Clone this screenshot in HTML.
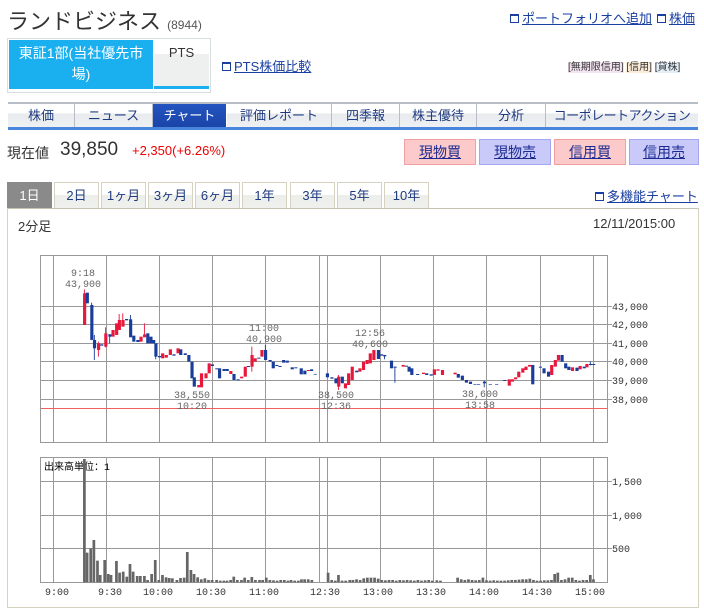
<!DOCTYPE html>
<html><head><meta charset="utf-8"><style>
*{margin:0;padding:0;box-sizing:border-box}
body{width:704px;height:602px;overflow:hidden;background:#fff;font-family:"Liberation Sans","Noto Sans CJK JP",sans-serif;color:#333;position:relative}
.a{position:absolute;white-space:nowrap}
a,.lk{color:#1a3fa0;text-decoration:underline}
.ico{display:inline-block;width:9px;height:9px;border:1px solid #1a3fa0;border-top-width:2px;margin-right:3px;vertical-align:0}
.tab{position:absolute;top:104px;height:23px;font-size:13px;text-align:center;line-height:23px;color:#1f3a80;background:linear-gradient(#fff 0,#fff 40%,#e8ebee 41%,#eef0f2 100%);border-right:1px solid #b8bec8;overflow:hidden;white-space:nowrap}
.btn{position:absolute;top:139px;height:26px;width:72px;font-size:14px;text-align:center;line-height:25px;text-decoration:underline;color:#1a2a90}
.p{position:absolute;top:182px;height:27px;width:45px;font-size:13px;text-align:center;line-height:26px;color:#1f3a80;background:linear-gradient(#fff 45%,#eceeea 46%,#f0f1ee);border:1px solid #d6d2c2;border-bottom:none}
</style></head><body>
<div class="a" style="left:7px;top:4px;font-size:22px;color:#333">ランドビジネス <span style="font-size:12px;color:#555">(8944)</span></div>
<div class="a lk" style="left:510px;top:8px;font-size:13px"><span class="ico"></span>ポートフォリオへ追加</div>
<div class="a lk" style="left:657px;top:8px;font-size:13px"><span class="ico"></span>株価</div>

<div class="a" style="left:7px;top:38px;width:204px;height:55px;border:1px solid #d8dde0;background:#fff"></div>
<div class="a" style="left:9px;top:40px;width:144px;height:49px;background:#1ab0f0;color:#fff;font-size:14px;text-align:center;line-height:21px;padding-top:3px;white-space:normal">東証1部(当社優先市<br>場)</div>
<div class="a" style="left:154px;top:40px;width:55px;height:49px;background:linear-gradient(#fff 0,#fff 30%,#eef0f0 31%,#eef0f0);border-bottom:3px solid #1ab0f0;font-size:13px;text-align:center;line-height:26px;color:#333">PTS</div>
<div class="a lk" style="left:222px;top:56px;font-size:13px"><span class="ico"></span>PTS株価比較</div>
<div class="a" style="left:568px;top:58px;font-size:10px;color:#333"><span style="background:#f4e4f2">[無期限信用]</span> <span style="background:#fbecd8">[信用]</span> <span style="background:#e2eef8">[貸株]</span></div>

<div class="a" style="left:8px;top:102px;width:690px;height:2px;background:#b8bec8"></div>
<div class="tab" style="left:8px;width:67px">株価</div>
<div class="tab" style="left:75px;width:78px">ニュース</div>
<div class="tab" style="left:153px;width:74px;color:#fff;background:linear-gradient(#2454c0,#1a44a8);border-right:1px solid #fff">チャート</div>
<div class="tab" style="left:227px;width:105px">評価レポート</div>
<div class="tab" style="left:332px;width:68px">四季報</div>
<div class="tab" style="left:400px;width:77px">株主優待</div>
<div class="tab" style="left:477px;width:69px">分析</div>
<div class="tab" style="left:546px;width:152px;border-right:none;letter-spacing:-0.5px">コーポレートアクション</div>
<div class="a" style="left:8px;top:127px;width:690px;height:3px;background:#4a85dd"></div>

<div class="a" style="left:7px;top:143px;font-size:14px;color:#333">現在値</div>
<div class="a" style="left:60px;top:139px;font-size:19px;color:#333">39,850</div>
<div class="a" style="left:132px;top:143px;font-size:13px;color:#e00">+2,350(+6.26%)</div>
<div class="btn" style="left:404px;background:#fccaca;border:1px solid #f0a0a0">現物買</div>
<div class="btn" style="left:479px;background:#cacafa;border:1px solid #a6a6f0">現物売</div>
<div class="btn" style="left:554px;background:#fccaca;border:1px solid #f0a0a0">信用買</div>
<div class="btn" style="left:629px;background:#cacafa;border:1px solid #a6a6f0;width:70px">信用売</div>

<div class="p" style="left:7px;background:#8a8a8a;color:#fff;border-color:#8a8a8a">1日</div>
<div class="p" style="left:54px">2日</div>
<div class="p" style="left:101px">1ヶ月</div>
<div class="p" style="left:148px">3ヶ月</div>
<div class="p" style="left:195px">6ヶ月</div>
<div class="p" style="left:242px">1年</div>
<div class="p" style="left:290px">3年</div>
<div class="p" style="left:337px">5年</div>
<div class="p" style="left:384px">10年</div>
<div class="a lk" style="left:595px;top:186px;font-size:13px"><span class="ico"></span>多機能チャート</div>

<div class="a" style="left:7px;top:208px;width:692px;height:400px;border:1px solid #d6d2c2;border-top:1px solid #c8c4b4"></div>
<div class="a" style="left:18px;top:216px;font-size:13px;color:#333">2分足</div>
<div class="a" style="left:593px;top:216px;font-size:13px;color:#333">12/11/2015:00</div>

<svg class="a" style="left:0;top:0" width="704" height="602" xmlns="http://www.w3.org/2000/svg">
<g stroke="#999" stroke-width="1" fill="none">
<rect x="40.5" y="255.5" width="567" height="187"/>
<rect x="40.5" y="457.5" width="567" height="125"/>
<path d="M53.5 256V442M106.5 256V442M159.5 256V442M212.5 256V442M265.5 256V442M319.5 256V442M327.5 256V442M380.5 256V442M433.5 256V442M486.5 256V442M540.5 256V442M593.5 256V442"/>
<path d="M53.5 458V582M106.5 458V582M159.5 458V582M212.5 458V582M265.5 458V582M319.5 458V582M327.5 458V582M380.5 458V582M433.5 458V582M486.5 458V582M540.5 458V582M593.5 458V582"/>
<path d="M41 306.5H612M41 324.5H612M41 343.5H612M41 361.5H612M41 380.5H612M41 399.5H612"/>
<path d="M41 481.5H612M41 515.5H612M41 548.5H612"/>
</g>
<path d="M41 408.5H607" stroke="#f06060" stroke-width="1"/>
<g font-family="Liberation Mono, monospace" font-size="10" fill="#333">
<text x="612" y="310">43,000</text><text x="612" y="328">42,000</text><text x="612" y="347">41,000</text><text x="612" y="365">40,000</text><text x="612" y="384">39,000</text><text x="612" y="403">38,000</text>
<text x="612" y="485">1,500</text><text x="612" y="519">1,000</text><text x="612" y="552">500</text>
<g fill="#666" text-anchor="middle">
<text x="83" y="276">9:18</text><text x="83" y="287">43,900</text>
<text x="192" y="398">38,550</text><text x="192" y="409">10:20</text>
<text x="264" y="331">11:00</text><text x="264" y="342">40,900</text>
<text x="336" y="398">38,500</text><text x="336" y="409">12:36</text>
<text x="370" y="336">12:56</text><text x="370" y="347">40,600</text>
<text x="480" y="397">38,600</text><text x="480" y="408">13:58</text>
</g>
<text x="44" y="470" fill="#000">出来高単位：1</text>
<g text-anchor="middle" fill="#333"><text x="57" y="595">9:00</text><text x="110" y="595">9:30</text><text x="158" y="595">10:00</text><text x="211" y="595">10:30</text><text x="264" y="595">11:00</text><text x="325" y="595">12:30</text><text x="378" y="595">13:00</text><text x="431" y="595">13:30</text><text x="484" y="595">14:00</text><text x="537" y="595">14:30</text><text x="590" y="595">15:00</text></g>
</g>
<g transform="translate(0,240) scale(0.4513,0.3333)">
<g fill="#e8183c">
<rect x="186" y="148" width="2" height="107"/><rect x="184" y="160" width="7" height="95"/>
<rect x="215" y="310" width="7" height="20"/><rect x="217" y="305" width="2" height="45"/>
<rect x="231" y="280" width="7" height="40"/><rect x="233" y="262" width="2" height="60"/>
<rect x="247" y="270" width="7" height="20"/><rect x="255" y="250" width="7" height="35"/><rect x="261" y="240" width="7" height="30"/><rect x="263" y="222" width="2" height="20"/>
<rect x="269" y="240" width="7" height="20"/><rect x="271" y="220" width="2" height="20"/>
<rect x="309" y="290" width="7" height="15"/><rect x="317" y="283" width="7" height="9"/><rect x="319" y="250" width="2" height="35"/>
<rect x="357" y="340" width="7" height="15"/><rect x="365" y="345" width="7" height="8"/><rect x="374" y="328" width="7" height="17"/><rect x="391" y="325" width="7" height="15"/>
<rect x="437" y="435" width="7" height="7"/><rect x="443" y="400" width="7" height="42"/><rect x="453" y="400" width="7" height="15"/><rect x="460" y="370" width="7" height="30"/>
<rect x="508" y="393" width="7" height="9"/><rect x="532" y="410" width="7" height="5"/><rect x="540" y="380" width="7" height="30"/>
<rect x="555" y="345" width="7" height="35"/><rect x="557" y="320" width="2" height="75"/><rect x="562" y="355" width="7" height="10"/><rect x="577" y="330" width="7" height="20"/>
<rect x="680" y="390" width="7" height="3"/><rect x="747" y="410" width="7" height="30"/><rect x="749" y="405" width="2" height="45"/>
<rect x="762" y="430" width="7" height="15"/><rect x="769" y="400" width="7" height="35"/><rect x="777" y="380" width="7" height="40"/>
<rect x="794" y="385" width="7" height="10"/><rect x="802" y="365" width="7" height="25"/><rect x="810" y="360" width="7" height="12"/><rect x="817" y="340" width="7" height="30"/><rect x="825" y="330" width="7" height="30"/>
<rect x="890" y="375" width="7" height="5"/><rect x="935" y="398" width="7" height="4"/><rect x="959" y="388" width="7" height="17"/><rect x="967" y="388" width="7" height="4"/><rect x="977" y="390" width="7" height="15"/>
<rect x="1005" y="398" width="7" height="5"/><rect x="1125" y="418" width="7" height="19"/><rect x="1132" y="418" width="7" height="7"/><rect x="1139" y="412" width="7" height="6"/><rect x="1146" y="395" width="7" height="17"/><rect x="1155" y="385" width="7" height="13"/><rect x="1162" y="380" width="7" height="10"/><rect x="1170" y="375" width="7" height="5"/>
<rect x="1219" y="375" width="7" height="30"/><rect x="1227" y="360" width="7" height="20"/><rect x="1234" y="345" width="7" height="17"/><rect x="1265" y="382" width="7" height="11"/><rect x="1282" y="378" width="7" height="10"/><rect x="1297" y="372" width="7" height="10"/>
</g>
<g fill="#1a3c9a">
<rect x="190" y="158" width="7" height="32"/>
<rect x="200" y="195" width="7" height="105"/><rect x="202" y="188" width="2" height="10"/>
<rect x="206" y="300" width="7" height="25"/><rect x="208" y="285" width="2" height="75"/>
<rect x="222" y="313" width="7" height="4"/><rect x="240" y="283" width="7" height="7"/><rect x="242" y="283" width="2" height="27"/>
<rect x="277" y="237" width="7" height="4"/>
<rect x="286" y="238" width="7" height="54"/><rect x="288" y="225" width="2" height="15"/>
<rect x="293" y="287" width="7" height="18"/><rect x="302" y="300" width="7" height="6"/>
<rect x="324" y="280" width="7" height="30"/><rect x="331" y="290" width="7" height="20"/><rect x="337" y="300" width="7" height="10"/>
<rect x="342" y="310" width="7" height="40"/><rect x="344" y="345" width="2" height="13"/><rect x="350" y="348" width="7" height="4"/>
<rect x="382" y="343" width="7" height="4"/><rect x="397" y="328" width="7" height="17"/><rect x="407" y="340" width="7" height="5"/>
<rect x="415" y="345" width="7" height="20"/><rect x="422" y="365" width="7" height="50"/><rect x="427" y="412" width="7" height="28"/>
<rect x="467" y="373" width="7" height="5"/><rect x="477" y="385" width="7" height="3"/><rect x="483" y="385" width="7" height="30"/>
<rect x="493" y="387" width="7" height="6"/><rect x="500" y="387" width="7" height="6"/><rect x="515" y="402" width="7" height="18"/><rect x="524" y="418" width="7" height="3"/>
<rect x="547" y="378" width="7" height="3"/><rect x="570" y="353" width="7" height="3"/>
<rect x="585" y="330" width="7" height="30"/><rect x="587" y="315" width="2" height="20"/>
<rect x="595" y="360" width="7" height="5"/><rect x="602" y="365" width="7" height="20"/><rect x="610" y="375" width="7" height="3"/><rect x="617" y="378" width="7" height="3"/>
<rect x="625" y="360" width="7" height="8"/><rect x="633" y="362" width="7" height="6"/><rect x="644" y="382" width="7" height="6"/><rect x="652" y="382" width="7" height="3"/>
<rect x="664" y="385" width="7" height="18"/><rect x="672" y="392" width="7" height="11"/><rect x="687" y="388" width="7" height="5"/><rect x="695" y="402" width="7" height="2"/>
<rect x="722" y="400" width="7" height="12"/><rect x="732" y="412" width="7" height="4"/><rect x="741" y="415" width="7" height="15"/><rect x="755" y="410" width="7" height="20"/>
<rect x="787" y="392" width="7" height="5"/>
<rect x="835" y="330" width="7" height="27"/><rect x="842" y="343" width="7" height="4"/><rect x="849" y="345" width="7" height="4"/><rect x="851" y="345" width="2" height="13"/>
<rect x="864" y="362" width="7" height="23"/><rect x="874" y="380" width="2" height="48"/><rect x="872" y="380" width="7" height="3"/>
<rect x="897" y="377" width="7" height="3"/><rect x="903" y="380" width="7" height="15"/><rect x="909" y="385" width="7" height="20"/><rect x="922" y="402" width="7" height="3"/>
<rect x="942" y="400" width="7" height="5"/><rect x="952" y="403" width="7" height="4"/>
<rect x="1012" y="402" width="7" height="11"/><rect x="1021" y="407" width="7" height="13"/><rect x="1030" y="420" width="7" height="8"/><rect x="1039" y="425" width="7" height="7"/>
<rect x="1049" y="432" width="7" height="2"/><rect x="1057" y="432" width="7" height="2"/><rect x="1070" y="425" width="7" height="5"/><rect x="1072" y="422" width="2" height="20"/><rect x="1083" y="432" width="7" height="2"/><rect x="1097" y="432" width="7" height="2"/><rect x="1115" y="420" width="7" height="3"/>
<rect x="1177" y="375" width="7" height="58"/><rect x="1194" y="380" width="7" height="3"/><rect x="1202" y="385" width="7" height="15"/><rect x="1212" y="395" width="7" height="15"/>
<rect x="1242" y="345" width="7" height="20"/><rect x="1250" y="370" width="7" height="15"/><rect x="1257" y="380" width="7" height="10"/><rect x="1275" y="383" width="7" height="10"/><rect x="1291" y="380" width="7" height="5"/><rect x="1305" y="372" width="7" height="3"/><rect x="1312" y="372" width="7" height="3"/><rect x="1307" y="364" width="2" height="12"/>
</g>
</g>
<g transform="translate(0,440) scale(0.4513,0.3333)" fill="#666">
<rect x="184" y="57" width="6" height="370"/><rect x="190" y="338" width="6" height="89"/><rect x="198" y="325" width="6" height="102"/><rect x="205" y="300" width="6" height="127"/><rect x="213" y="362" width="6" height="65"/><rect x="219" y="405" width="6" height="22"/><rect x="229" y="360" width="6" height="67"/><rect x="237" y="402" width="6" height="25"/><rect x="243" y="405" width="6" height="22"/><rect x="255" y="363" width="6" height="64"/><rect x="262" y="398" width="6" height="29"/><rect x="270" y="395" width="6" height="32"/><rect x="278" y="410" width="6" height="17"/><rect x="285" y="372" width="6" height="55"/><rect x="292" y="395" width="6" height="32"/><rect x="301" y="408" width="6" height="19"/><rect x="308" y="408" width="6" height="19"/><rect x="317" y="408" width="6" height="19"/><rect x="324" y="420" width="6" height="7"/><rect x="333" y="402" width="6" height="25"/><rect x="341" y="360" width="6" height="67"/><rect x="349" y="420" width="6" height="7"/><rect x="357" y="405" width="6" height="22"/><rect x="365" y="412" width="6" height="15"/><rect x="372" y="414" width="6" height="13"/><rect x="379" y="415" width="6" height="12"/><rect x="389" y="420" width="6" height="7"/><rect x="397" y="414" width="6" height="13"/><rect x="405" y="413" width="6" height="14"/><rect x="412" y="336" width="6" height="91"/><rect x="420" y="390" width="6" height="37"/><rect x="427" y="402" width="6" height="25"/><rect x="435" y="412" width="6" height="15"/><rect x="443" y="418" width="6" height="9"/><rect x="451" y="415" width="6" height="12"/><rect x="459" y="420" width="6" height="7"/><rect x="467" y="420" width="6" height="7"/><rect x="477" y="420" width="6" height="7"/><rect x="485" y="422" width="6" height="5"/><rect x="493" y="422" width="6" height="5"/><rect x="500" y="422" width="6" height="5"/><rect x="508" y="420" width="6" height="7"/><rect x="515" y="410" width="6" height="17"/><rect x="523" y="420" width="6" height="7"/><rect x="532" y="420" width="6" height="7"/><rect x="539" y="413" width="6" height="14"/><rect x="547" y="420" width="6" height="7"/><rect x="555" y="411" width="6" height="16"/><rect x="563" y="420" width="6" height="7"/><rect x="572" y="420" width="6" height="7"/><rect x="579" y="420" width="6" height="7"/><rect x="587" y="413" width="6" height="14"/><rect x="595" y="420" width="6" height="7"/><rect x="603" y="421" width="6" height="6"/><rect x="611" y="422" width="6" height="5"/><rect x="619" y="420" width="6" height="7"/><rect x="627" y="420" width="6" height="7"/><rect x="635" y="422" width="6" height="5"/><rect x="642" y="420" width="6" height="7"/><rect x="650" y="422" width="6" height="5"/><rect x="658" y="422" width="6" height="5"/><rect x="665" y="418" width="6" height="9"/><rect x="672" y="418" width="6" height="9"/><rect x="680" y="418" width="6" height="9"/><rect x="688" y="420" width="6" height="7"/><rect x="724" y="398" width="6" height="29"/><rect x="732" y="420" width="6" height="7"/><rect x="740" y="422" width="6" height="5"/><rect x="747" y="405" width="6" height="22"/><rect x="755" y="422" width="6" height="5"/><rect x="763" y="422" width="6" height="5"/><rect x="772" y="420" width="6" height="7"/><rect x="779" y="420" width="6" height="7"/><rect x="787" y="418" width="6" height="9"/><rect x="795" y="420" width="6" height="7"/><rect x="803" y="415" width="6" height="12"/><rect x="811" y="413" width="6" height="14"/><rect x="819" y="413" width="6" height="14"/><rect x="827" y="413" width="6" height="14"/><rect x="835" y="416" width="6" height="11"/><rect x="843" y="420" width="6" height="7"/><rect x="851" y="421" width="6" height="6"/><rect x="859" y="420" width="6" height="7"/><rect x="867" y="420" width="6" height="7"/><rect x="875" y="422" width="6" height="5"/><rect x="883" y="420" width="6" height="7"/><rect x="891" y="421" width="6" height="6"/><rect x="899" y="420" width="6" height="7"/><rect x="907" y="421" width="6" height="6"/><rect x="915" y="422" width="6" height="5"/><rect x="923" y="420" width="6" height="7"/><rect x="931" y="422" width="6" height="5"/><rect x="939" y="421" width="6" height="6"/><rect x="947" y="420" width="6" height="7"/><rect x="955" y="422" width="6" height="5"/><rect x="965" y="421" width="6" height="6"/><rect x="973" y="422" width="6" height="5"/><rect x="1011" y="413" width="6" height="14"/><rect x="1019" y="418" width="6" height="9"/><rect x="1027" y="420" width="6" height="7"/><rect x="1035" y="418" width="6" height="9"/><rect x="1043" y="420" width="6" height="7"/><rect x="1051" y="421" width="6" height="6"/><rect x="1059" y="420" width="6" height="7"/><rect x="1067" y="413" width="6" height="14"/><rect x="1075" y="421" width="6" height="6"/><rect x="1083" y="422" width="6" height="5"/><rect x="1091" y="421" width="6" height="6"/><rect x="1099" y="422" width="6" height="5"/><rect x="1107" y="422" width="6" height="5"/><rect x="1115" y="422" width="6" height="5"/><rect x="1123" y="421" width="6" height="6"/><rect x="1131" y="420" width="6" height="7"/><rect x="1139" y="420" width="6" height="7"/><rect x="1147" y="419" width="6" height="8"/><rect x="1155" y="418" width="6" height="9"/><rect x="1163" y="418" width="6" height="9"/><rect x="1171" y="416" width="6" height="11"/><rect x="1179" y="420" width="6" height="7"/><rect x="1187" y="422" width="6" height="5"/><rect x="1195" y="422" width="6" height="5"/><rect x="1203" y="421" width="6" height="6"/><rect x="1211" y="421" width="6" height="6"/><rect x="1219" y="420" width="6" height="7"/><rect x="1226" y="402" width="6" height="25"/><rect x="1233" y="398" width="6" height="29"/><rect x="1241" y="420" width="6" height="7"/><rect x="1249" y="418" width="6" height="9"/><rect x="1257" y="413" width="6" height="14"/><rect x="1265" y="413" width="6" height="14"/><rect x="1273" y="420" width="6" height="7"/><rect x="1281" y="422" width="6" height="5"/><rect x="1289" y="420" width="6" height="7"/><rect x="1297" y="420" width="6" height="7"/><rect x="1305" y="405" width="6" height="22"/><rect x="1312" y="418" width="6" height="9"/>
</g>
</svg>
</body></html>
